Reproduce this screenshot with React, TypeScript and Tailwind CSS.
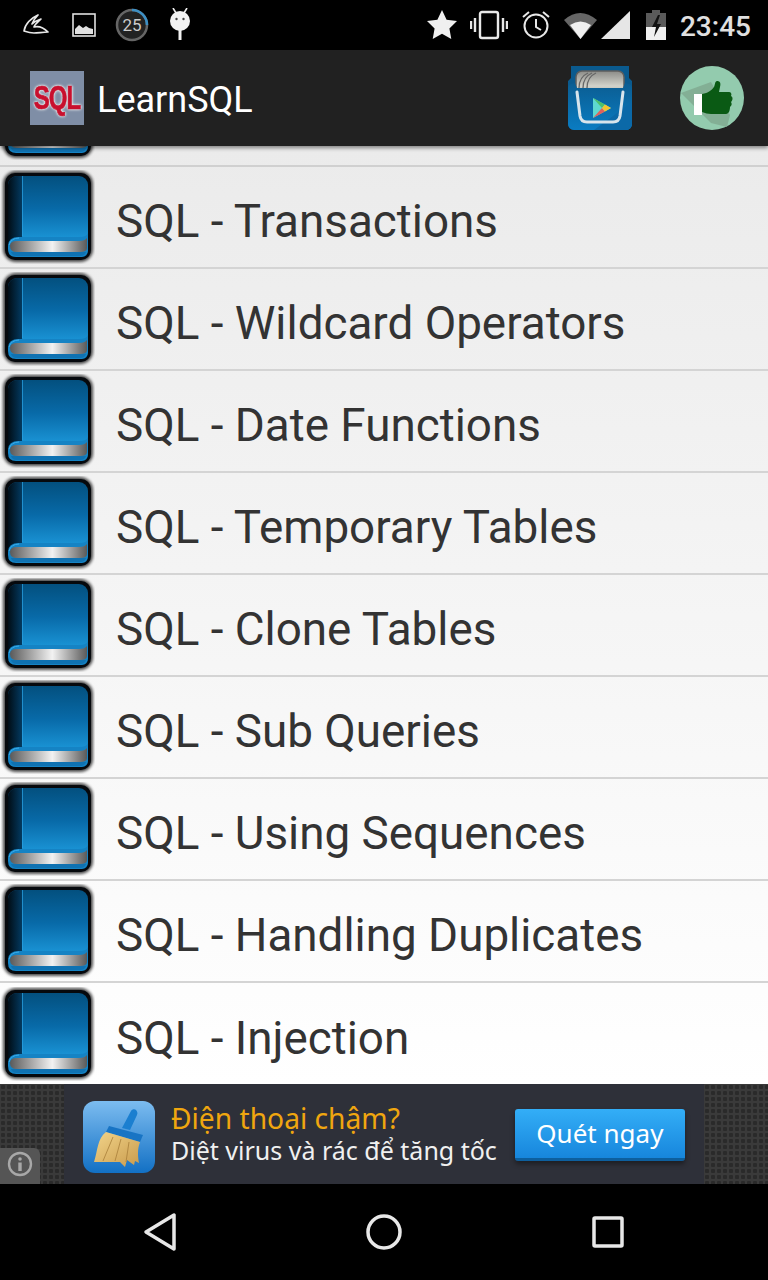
import React from "react";

const rows = [
  "SQL - Transactions",
  "SQL - Wildcard Operators",
  "SQL - Date Functions",
  "SQL - Temporary Tables",
  "SQL - Clone Tables",
  "SQL - Sub Queries",
  "SQL - Using Sequences",
  "SQL - Handling Duplicates",
  "SQL - Injection",
];

function Book() {
  return (
    <svg width="94" height="94" viewBox="0 0 94 94" className="shrink-0">
      <defs>
        <linearGradient id="cover" x1="0" y1="0" x2="0" y2="1">
          <stop offset="0" stopColor="#03507f" />
          <stop offset="0.5" stopColor="#086aa8" />
          <stop offset="1" stopColor="#1c98da" />
        </linearGradient>
        <linearGradient id="spine" x1="0" y1="0" x2="1" y2="0">
          <stop offset="0" stopColor="#010d16" />
          <stop offset="1" stopColor="#033a60" />
        </linearGradient>
        <linearGradient id="pages" x1="0" y1="0" x2="1" y2="0">
          <stop offset="0" stopColor="#5a5a5a" />
          <stop offset="0.55" stopColor="#f2f2f2" />
          <stop offset="1" stopColor="#5a5a5a" />
        </linearGradient>
        <filter id="halo" x="-10%" y="-10%" width="120%" height="120%">
          <feGaussianBlur stdDeviation="1.500" />
        </filter>
      </defs>
      <rect x="2" y="1" width="90" height="91" rx="13" fill="#000" opacity="0.7" filter="url(#halo)" />
      <rect x="4" y="3" width="86" height="87" rx="10" fill="#06090d" />
      <path d="M7 15a9 9 0 0 1 9-9h62a9 9 0 0 1 9 9v57H7z" fill="url(#cover)" />
      <path d="M7 15a9 9 0 0 1 9-9h5v66H7z" fill="url(#spine)" />
      <rect x="21" y="6" width="1" height="60" fill="#2aa0e0" opacity="0.75" />
      <path d="M7 76q0-9 11-9h60q8 0 9-4v18a6 6 0 0 1-6 6H15q-8 0-8-8z" fill="#1583c4" />
      <path d="M8 75q2-7 10-7" fill="none" stroke="#3bb0ee" strokeWidth="1" />
      <path d="M9 76q0-5 7-5h62q6 0 8-3v10q0 4-7 4H16q-7 0-7-6z" fill="url(#pages)" />
      <path d="M10 82h75q-1 4-6 4H16q-5 0-6-4z" fill="#0f72b2" />
    </svg>
  );
}

function StatusBar() {
  return (
    <div className="flex h-[50px] items-center bg-black text-[#e0e0e0]">
      <svg width="26" height="24" viewBox="0 0 26 24" className="ml-[23px]">
        <path d="M1 18C2 11 8 5 15 2c-3 3-5 6-6 9 3-3 6-4 9-5-3 3-6 5-7 8 4-1 9 0 14 5-5 0-10 1-14 1-4 0-7-1-10-2z" fill="none" stroke="#e8e8e8" strokeWidth="1.700" strokeLinejoin="round" />
      </svg>
      <svg width="24" height="24" viewBox="0 0 24 24" className="ml-[23px]">
        <rect x="1" y="1" width="22" height="22" fill="none" stroke="#e0e0e0" strokeWidth="1.600" />
        <path d="M3 21v-5l4-4 4 3 3-2 3 2 4 1v5z" fill="#e0e0e0" />
      </svg>
      <svg width="34" height="34" viewBox="0 0 34 34" className="ml-[19px]">
        <circle cx="17" cy="17" r="15" fill="#222" stroke="#666" strokeWidth="2.500" />
        <path d="M17 2a15 15 0 0 1 15 15" fill="none" stroke="#3d8fc4" strokeWidth="2.500" />
        <text x="17" y="23" textAnchor="middle" fontFamily="Roboto, sans-serif" fontSize="17" fill="#ccc">25</text>
      </svg>
      <svg width="24" height="32" viewBox="0 0 24 32" className="ml-[19px] -mt-[2px]">
        <path d="M5 0l3 5M19 0l-3 5" stroke="#eee" strokeWidth="1.600" />
        <circle cx="12" cy="13" r="10" fill="#f2f2f2" />
        <circle cx="8.500" cy="11" r="1.200" fill="#444" />
        <circle cx="15.500" cy="11" r="1.200" fill="#444" />
        <rect x="10.500" y="22" width="3" height="10" fill="#f2f2f2" />
      </svg>

      <svg width="30" height="30" viewBox="0 0 30 30" className="ml-auto">
        <path d="M15 0l4.600 9.700 10.400 1.400-7.600 7.300 1.900 10.600L15 23.800 5.700 29l1.900-10.600L0 11.100l10.400-1.400z" fill="#f0f0f0" />
      </svg>
      <svg width="38" height="30" viewBox="0 0 38 30" className="ml-[13px]">
        <rect x="10" y="2" width="18" height="26" rx="2" fill="none" stroke="#e8e8e8" strokeWidth="2.400" />
        <path d="M5 8v14M1 11v8M33 8v14M37 11v8" stroke="#e8e8e8" strokeWidth="2.400" />
      </svg>
      <svg width="30" height="30" viewBox="0 0 30 30" className="ml-[13px]">
        <circle cx="15" cy="16" r="11.500" fill="none" stroke="#e8e8e8" strokeWidth="2" />
        <path d="M15 9v8l5 3M2 7l6-5M28 7l-6-5" fill="none" stroke="#e8e8e8" strokeWidth="2" />
      </svg>
      <svg width="33" height="27" viewBox="0 0 33 27" className="ml-[13px] mt-[1px]">
        <path d="M0 8q16-14 33 0L16.500 27z" fill="#666" />
        <path d="M6 13q10.500-7 21 0L16.500 27z" fill="#f0f0f0" />
      </svg>
      <svg width="29" height="28" viewBox="0 0 29 28" className="ml-[4px]">
        <path d="M29 0v28H0z" fill="#e6e6e6" />
      </svg>
      <svg width="20" height="30" viewBox="0 0 20 30" className="ml-[16px]">
        <path d="M6 0h8v3h6v27H0V3h6z" fill="#5a5a5a" />
        <path d="M0 17h20v13H0z" fill="#f0f0f0" />
        <path d="M12 5l-6 12h4l-2 10 7-13h-4l3-9z" fill="#111" />
      </svg>
      <span className="mt-[3px] ml-[14px] mr-[17px] font-['Roboto',sans-serif] text-[28px] leading-none font-medium text-[#e0e0e0]">23:45</span>
    </div>
  );
}

function StoreIcon() {
  return (
    <svg width="64" height="64" viewBox="0 0 64 64">
      <defs>
        <linearGradient id="storeBg" x1="0" y1="0" x2="0" y2="1">
          <stop offset="0" stopColor="#0b5d92" />
          <stop offset="1" stopColor="#0a7cc2" />
        </linearGradient>
        <linearGradient id="card" x1="0" y1="0" x2="0" y2="1">
          <stop offset="0" stopColor="#8c8c88" />
          <stop offset="0.5" stopColor="#d2d2ca" />
          <stop offset="1" stopColor="#8a8a84" />
        </linearGradient>
      </defs>
      <path d="M3 0h58v12l3 3v43a6 6 0 0 1-6 6H6a6 6 0 0 1-6-6V15l3-3z" fill="#0a5a8e" />
      <rect x="8" y="5" width="48" height="30" rx="6" fill="url(#card)" stroke="#5f5f5f" strokeWidth="1.500" />
      <path d="M11 22q0-11 9-15M15 22q0-11 9-15M19 22q0-11 9-15" fill="none" stroke="#666" strokeWidth="1.300" />
      <path d="M0 22q0-3 3-4l4-1 2 5h46l2-5 4 1q3 1 3 4v36a6 6 0 0 1-6 6H6a6 6 0 0 1-6-6z" fill="url(#storeBg)" />
      <path d="M64 36v22a6 6 0 0 1-6 6H26z" fill="#0b69a8" />
      <path d="M9 26l3 24q1 6 7 6h26q6 0 7-6l3-24" fill="none" stroke="#d8e4ec" strokeWidth="3" strokeLinecap="round" />
      <path d="M25 32v20l18-10z" fill="#5ed8d0" />
      <path d="M25 52l12-6.500-3-3.500z" fill="#e0605c" />
      <path d="M25 32l12 6.500-3 3.500z" fill="#4fc06c" />
      <path d="M37 38.500l6 3.500-6 3.500-3-3.500z" fill="#f4c430" />
    </svg>
  );
}

function LikeIcon() {
  return (
    <svg width="64" height="64" viewBox="0 0 64 64">
      <circle cx="32" cy="32" r="32" fill="#93cbae" />
      <path d="M1 27l30-11 19 33-3 12-16-4z" fill="#7fa78f" opacity="0.8" />
      <rect x="14" y="28" width="8" height="21" fill="#ffffff" />
      <path d="M22 28c6-1 10-4 12-7 1-2 1-6 3-6 3 0 4 2 3 6l-1 5h10c2 0 3 2 2 4 2 1 2 4 0 6 1 2 1 3-1 5 0 3-1 7-4 7H31c-3 0-6-1-9-2z" fill="#0a5a14" />
    </svg>
  );
}

function AppBar() {
  return (
    <div className="relative z-10 flex h-24 items-center bg-[#212121] shadow-[0_2px_4px_rgba(0,0,0,0.45)]">
      <div className="ml-[30px] flex h-[54px] w-[54px] items-center justify-center bg-[#7f8ea6]">
        <span className="scale-y-[1.35] font-['Liberation_Sans',sans-serif] text-[24px] leading-none font-bold tracking-[-1px] text-[#c8102e] [-webkit-text-stroke:0.5px_#c8102e] [text-shadow:0_0_2px_#eee,0_0_2px_#eee,0_0_3px_#eee]">SQL</span>
      </div>
      <span className="mt-1 ml-[13px] font-['Roboto',sans-serif] text-[36px] text-white">LearnSQL</span>
      <div className="ml-auto flex items-center gap-[48px] pr-[24px]">
        <StoreIcon />
        <LikeIcon />
      </div>
    </div>
  );
}

function Broom() {
  return (
    <svg width="72" height="72" viewBox="0 0 72 72" className="mt-[5px] shrink-0">
      <defs>
        <linearGradient id="adIcon" x1="0" y1="0" x2="0" y2="1">
          <stop offset="0" stopColor="#7cbcf0" />
          <stop offset="1" stopColor="#1270c4" />
        </linearGradient>
        <linearGradient id="straw" x1="0" y1="0" x2="1" y2="1">
          <stop offset="0" stopColor="#f2d48a" />
          <stop offset="1" stopColor="#c99b4c" />
        </linearGradient>
      </defs>
      <rect width="72" height="72" rx="12" fill="url(#adIcon)" />
      <path d="M39 27l9-17c1-2 4-2 5-1s2 3 1 5l-7 15z" fill="#1b7fd0" />
      <path d="M26 25l34 9-3 7-34-10z" fill="#1874c4" />
      <path d="M23 31l34 10c-3 8-2 15-1 21l-4-2-1 4-7-5-2 7-5-5-26 0c4-12 3-23 12-30z" fill="url(#straw)" />
      <path d="M30 36l-10 24M38 38l-6 22M46 41l-3 20" stroke="#a87f3a" strokeWidth="0.800" fill="none" />
    </svg>
  );
}

function Ad() {
  const side = "w-16 shrink-0 bg-[#3a3a3a] bg-[radial-gradient(circle,#2a2a2a_2px,transparent_2.5px)] bg-[length:6px_6px]";
  return (
    <div className="relative flex h-[100px]">
      <div className={side} />
      <div className="flex flex-1 items-center bg-[#2e3039] pl-[19px]">
        <Broom />
        <div className="mb-[3px] ml-4 flex flex-col font-['Noto_Sans',sans-serif]">
          <span className="text-[28.2px] leading-[34px] whitespace-nowrap text-[#f0a60f]">Điện thoại chậm?</span>
          <span className="text-[25px] leading-[30px] whitespace-nowrap text-[#f0f0f0]">Diệt virus và rác để tăng tốc</span>
        </div>
        <div className="mt-[2px] ml-[18px] flex h-[52px] w-[170px] items-center justify-center rounded-[3px] border-b-[3px] border-[#0d5f9e] bg-gradient-to-b from-[#33aef7] to-[#1786dc] font-['Noto_Sans',sans-serif] text-[26px] text-white shadow-[0_3px_5px_rgba(0,0,0,0.4)]">
          Quét ngay
        </div>
      </div>
      <div className={side} />
      <div className="absolute bottom-0 left-0 flex h-9 w-10 items-center justify-center rounded-tr-md bg-[#555555] pb-1">
        <svg width="26" height="26" viewBox="0 0 26 26">
          <circle cx="13" cy="13" r="11" fill="none" stroke="#a8a8a8" strokeWidth="2.400" />
          <circle cx="13" cy="8" r="1.800" fill="#a8a8a8" />
          <rect x="11.300" y="11.500" width="3.400" height="8.500" fill="#a8a8a8" />
        </svg>
      </div>
    </div>
  );
}

function NavBar() {
  return (
    <div className="flex h-24 items-center justify-between bg-black pl-[143px] pr-[143px]">
      <svg width="34" height="40" viewBox="0 0 34 40">
        <path d="M31 3v34L3 20z" fill="none" stroke="#e8e8e8" strokeWidth="3.500" strokeLinejoin="round" />
      </svg>
      <svg width="36" height="36" viewBox="0 0 36 36">
        <circle cx="18" cy="18" r="16" fill="none" stroke="#e8e8e8" strokeWidth="3.500" />
      </svg>
      <svg width="34" height="34" viewBox="0 0 34 34">
        <rect x="3" y="3" width="28" height="28" rx="1" fill="none" stroke="#e8e8e8" strokeWidth="3.500" />
      </svg>
    </div>
  );
}

export default function App() {
  return (
    <div className="flex h-[1280px] w-[768px] flex-col overflow-hidden bg-black">
      <StatusBar />
      <AppBar />
      <div className="flex h-[938px] flex-col overflow-hidden bg-gradient-to-b from-[#ebebeb] to-white">
        <div className="flex h-[21px] shrink-0 items-end overflow-hidden border-b-2 border-[#d0d0d0] pl-[1px]">
          <div className="mb-[5px] shrink-0">
            <Book />
          </div>
        </div>
        {rows.map((r) => (
          <div key={r} className="flex h-[102px] shrink-0 items-center border-b-2 border-[#d4d4d4] pl-[1px] last:border-b-0">
            <Book />
            <span className="ml-[21px] pt-[10px] font-['Roboto',sans-serif] text-[45.8px] leading-none text-[#333333]">{r}</span>
          </div>
        ))}
      </div>
      <Ad />
      <NavBar />
    </div>
  );
}
